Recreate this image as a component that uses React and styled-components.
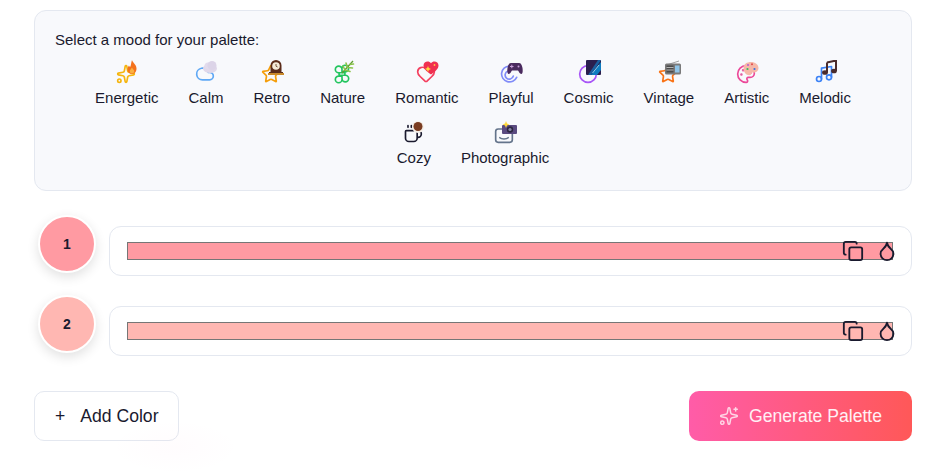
import React from "react";
import styled, { createGlobalStyle } from "styled-components";
import { Sparkles, Cloud, Star, Heart, Circle, Palette, Music, Coffee, Copy, Droplet } from "lucide-react";

const Global = createGlobalStyle`
  html, body { margin: 0; padding: 0; background: #fff; }
  body { font-family: "Liberation Sans", Arial, sans-serif; color: #1a1a2e; overflow: hidden; height: 474px; }
`;
const Page = styled.div`
  width: 878px; height: 474px; margin-left: 34px; padding-top: 10px; box-sizing: border-box;
  display: flex; flex-direction: column;
`;
const Panel = styled.section`
  background: #f8f9fc; border: 1px solid #e4e8f0; border-radius: 12px; height: 181px; box-sizing: border-box;
  padding: 20px 20px 0; margin-bottom: 25px;
`;
const PanelTitle = styled.div`
  font-size: 15px; line-height: 17px; margin-bottom: 4px; color: #1a1a2e;
`;
const Moods = styled.div`
  display: flex; flex-wrap: wrap; justify-content: center;
`;
const Mood = styled.div`
  display: flex; flex-direction: column; align-items: center; height: 60px; padding: 8px 15px 0; box-sizing: border-box;
  font-size: 15px; line-height: 17px; color: #1a1a2e; white-space: nowrap;
`;
const IconBox = styled.div`
  position: relative; width: 24px; height: 24px; margin-bottom: 5px;
  & > svg:first-child { position: absolute; left: 1px; top: 4px; }
`;
const Emoji = styled.svg`
  position: absolute; width: 16px; height: 16px; right: 0; top: 0;
`;
const Row = styled.div`
  display: flex; align-items: flex-start; gap: 13px; margin-bottom: 20px; padding-left: 4px;
`;
const Badge = styled.div`
  width: 54px; height: 54px; border-radius: 50%; background: ${p => p.$c}; flex: none;
  border: 2px solid #fff; margin-top: -1px; box-sizing: content-box;
  box-shadow: 0 4px 12px rgba(0,0,0,.12);
  display: flex; align-items: center; justify-content: center;
  font-size: 14px; font-weight: 700; color: #1a1a2e;
`;
const Card = styled.div`
  flex: 1; height: 50px; margin-top: 10px; box-sizing: border-box; background: #fff;
  border: 1px solid #e4e8f0; border-radius: 12px; padding: 15px 18px 15px 17px; position: relative;
`;
const Field = styled.div`
  height: 18px; box-sizing: border-box; background: ${p => p.$c}; border: 1px solid #767676;
`;
const CopyBtn = styled.span`
  position: absolute; left: 732px; top: 13px; width: 22px; height: 22px; color: #1a1a2e;
`;
const DropBtn = styled.span`
  position: absolute; left: 766px; top: 13px; width: 22px; height: 22px; color: #1a1a2e;
`;
const Actions = styled.div`
  display: flex; justify-content: space-between; margin-top: 15px;
`;
const AddBtn = styled.button`
  width: 145px; height: 50px; box-sizing: border-box; background: #fff; border: 1px solid #e4e8f0; border-radius: 10px;
  display: flex; align-items: center; gap: 15px; padding: 0 0 0 20px; font: 17.6px "Liberation Sans", Arial, sans-serif; color: #1a1a2e;
`;
const GenBtn = styled.button`
  width: 223px; height: 50px; box-sizing: border-box; border: 0; border-radius: 10px;
  background: linear-gradient(90deg, #ff5ca8, #ff5858); color: #fff0f5;
  display: flex; align-items: center; justify-content: center; gap: 10px;
  font: 17.6px "Liberation Sans", Arial, sans-serif;
`;
const Glow = styled.div`
  position: absolute; left: 110px; top: 420px; width: 130px; height: 54px; pointer-events: none;
  background: radial-gradient(ellipse at center, rgba(255,92,170,.02), rgba(255,92,170,0) 70%);
`;

const em = { viewBox: "0 0 16 16" };
const Line = ({ children, color }) => (
  <svg width="20" height="20" viewBox="0 0 24 24" fill="none" stroke={color} strokeWidth="2" strokeLinecap="round" strokeLinejoin="round">{children}</svg>
);
const moods = [
  ["Energetic", <Sparkles size={20} color="#f5b50f" />, <Emoji {...em}><path d="M9 0c.5 2.500 4.500 4.500 4.500 8.500 0 3.200-2 5.500-4.500 5.500S4.500 12 4.500 9.500c0-2 .8-3 1.500-4 .3 1 .8 1.300 1.300 1.500C8 5 8.200 2.500 9 0z" fill="#f4711c"/><path d="M9 13.500c-1.500 0-2.300-1.200-2.300-2.300 0-1.300 1.500-2 2.300-3.700.8 1.700 2.300 2.500 2.300 3.700 0 1.100-.8 2.300-2.300 2.300z" fill="#fbb040"/></Emoji>],
  ["Calm", <Cloud size={20} color="#5fa8f5" />, <Emoji {...em}><ellipse cx="8" cy="8.500" rx="7" ry="4.500" fill="#e0d8ea"/><circle cx="6" cy="6" r="3.500" fill="#e2dbec"/><circle cx="10" cy="5.500" r="4.500" fill="#dcd4e8"/></Emoji>],
  ["Retro", <Star size={20} color="#f59e0b" />, <Emoji {...em}><path d="M8 0a5.500 5.500 0 0 1 5.500 5.500V12H15v3H1v-3h1.500V5.500A5.500 5.500 0 0 1 8 0z" fill="#5b2c1a"/><circle cx="8" cy="6" r="3.800" fill="#f5ead8"/><path d="M8 4v2.200l1.600.8" stroke="#6b4a30" strokeWidth=".9" fill="none"/><rect x="0" y="13" width="16" height="2" fill="#c98a2c"/></Emoji>],
  ["Nature", <Line color="#22c55e"><path d="M12 9.500V6.500a4 4 0 1 0-4 4h4M12 9.500h4A4 4 0 1 0 12 6.500M12 14.500v3a4 4 0 1 0 4-4h-4M12 14.500H8a4 4 0 1 0 4 4M8.500 10.500v3h7v-3z"/></Line>, <Emoji {...em}><path d="M3 13 14 1" stroke="#5f9e30" strokeWidth="1.300"/><path d="M6 10 4 6M8.500 7.500 7 3M6 10l5 1.500M8.500 7.500l5 .5M11 4.500l3.500-.5" stroke="#8bc34a" strokeWidth="1.600" strokeLinecap="round"/></Emoji>],
  ["Romantic", <Heart size={20} color="#f43f5e" />, <Emoji {...em}><path d="M8 14.500C3 11 .5 8.500.5 5.500.5 3 2.500 1.500 4.500 1.500c1.500 0 2.700.6 3.500 1.700.8-1.100 2-1.700 3.500-1.700 2 0 4 1.500 4 4 0 3-2.500 5.500-7.500 9z" fill="#f0304f"/><path d="M5 6l.9 2.100 2.100.9-2.100.9L5 12l-.9-2.100L2 9l2.100-.9z" fill="#ffd83d"/><circle cx="11.500" cy="5" r=".9" fill="#ffc83d"/></Emoji>],
  ["Playful", <Line color="#818cf8"><path d="M20 16a9.500 9.500 0 1 1-9-13.500M16 14.500a5 5 0 1 1-6.500-6"/></Line>, <Emoji {...em}><path d="M4 3h8c2 0 3 2 3.500 5 .4 3 .3 6-1.300 6-1.500 0-2.200-2.500-3.200-3.500H5C4 11.500 3.300 14 1.800 14 .2 14 .1 11 .5 8 1 5 2 3 4 3z" fill="#4a2a5e"/><circle cx="11.500" cy="6.500" r="1" fill="#c9a0dc"/><rect x="3" y="6" width="3.500" height="1" fill="#c9a0dc"/><rect x="4.300" y="4.700" width="1" height="3.500" fill="#c9a0dc"/></Emoji>],
  ["Cosmic", <Circle size={20} color="#a855f7" />, <Emoji {...em}><rect x="1" y="0" width="15" height="15" rx="1" fill="#2b1f4e"/><path d="M6 15 16 2v8l-4 5z" fill="#0f7cc0"/><path d="M3 15 13 0h3L6 15z" fill="#1a5fa0"/><path d="M7.500 13 14 5" stroke="#8ed0f0" strokeWidth="1"/></Emoji>],
  ["Vintage", <Star size={20} color="#f97316" />, <Emoji {...em}><path d="M3 4.500 14 1" stroke="#a0a0a0" strokeWidth="1"/><rect x="0" y="3.500" width="16" height="11" rx="1.500" fill="#7a7a7a"/><rect x="1.500" y="5.500" width="7" height="7" fill="#4c4c4c"/><rect x="1.500" y="7" width="7" height="1" fill="#b5b5b5"/><rect x="1.500" y="9.500" width="7" height="1" fill="#b5b5b5"/><rect x="10" y="5.500" width="4.500" height="7" fill="#8ec4e8"/></Emoji>],
  ["Artistic", <Palette size={20} color="#ec4899" />, <Emoji {...em}><path d="M8 2c4 0 7.500 2.500 7.500 6S12 13 10 12.500c-1.500-.4-1.500 1-2 2-.5 1-2.500 1-4.500 0C1.500 13 .5 10.500.5 8 .5 4 4 2 8 2z" fill="#f6b8a8"/><circle cx="5" cy="5" r="1" fill="#b45bd0"/><circle cx="9" cy="4.300" r="1" fill="#e04a4a"/><circle cx="4.500" cy="9" r="1.100" fill="#32c060"/><circle cx="11.500" cy="9" r="1.100" fill="#3a70e0"/></Emoji>],
  ["Melodic", <Music size={20} color="#3b82f6" />, <Emoji {...em}><path d="M6 2.500 15 .5v10.500M6 2.500v10" stroke="#4a2b2b" strokeWidth="2" fill="none"/><ellipse cx="4" cy="12.500" rx="2.900" ry="2.300" fill="#4a2b2b"/><ellipse cx="13" cy="11" rx="2.900" ry="2.300" fill="#4a2b2b"/></Emoji>],
  ["Cozy", <Coffee size={20} color="#1a1a2e" />, <Emoji {...em}><circle cx="8" cy="7" r="6" fill="#f5efe8"/><circle cx="8" cy="6.500" r="4.500" fill="#7a3d22"/></Emoji>],
  ["Photographic", <Line color="#64748b"><rect x="2" y="6" width="20" height="16" rx="3"/><path d="M7 16.500c2 2 8 2 10 0"/></Line>, <Emoji {...em}><rect x="1" y="5" width="15" height="9" rx="1" fill="#5a4a80"/><circle cx="9" cy="9.500" r="3.200" fill="#2c2640"/><circle cx="9" cy="9.500" r="1.600" fill="#8a86a8"/><path d="M5 1l1 2.500L8.500 4.500 6 5.500 5 8 4 5.500 1.500 4.500 4 3.500z" fill="#ffd93d"/></Emoji>],
];

function ColorRow({ n, c }) {
  return (
    <Row>
      <Badge $c={c}>{n}</Badge>
      <Card>
        <Field $c={c} />
        <CopyBtn><Copy size={22} strokeWidth={2} /></CopyBtn>
        <DropBtn><Droplet size={22} strokeWidth={2} /></DropBtn>
      </Card>
    </Row>
  );
}

export default function App() {
  return (
    <Page>
      <Global />
      <Glow />
      <Panel>
        <PanelTitle>Select a mood for your palette:</PanelTitle>
        <Moods>
          {moods.map(([label, icon, emoji]) => (
            <Mood key={label}>
              <IconBox>{icon}{emoji}</IconBox>
              {label}
            </Mood>
          ))}
        </Moods>
      </Panel>
      <ColorRow n="1" c="#ff9aa2" />
      <ColorRow n="2" c="#ffb7b2" />
      <Actions>
        <AddBtn><span>+</span>Add Color</AddBtn>
        <GenBtn><Sparkles size={20} strokeWidth={1.8} color="#ffd6e6" />Generate Palette</GenBtn>
      </Actions>
    </Page>
  );
}
